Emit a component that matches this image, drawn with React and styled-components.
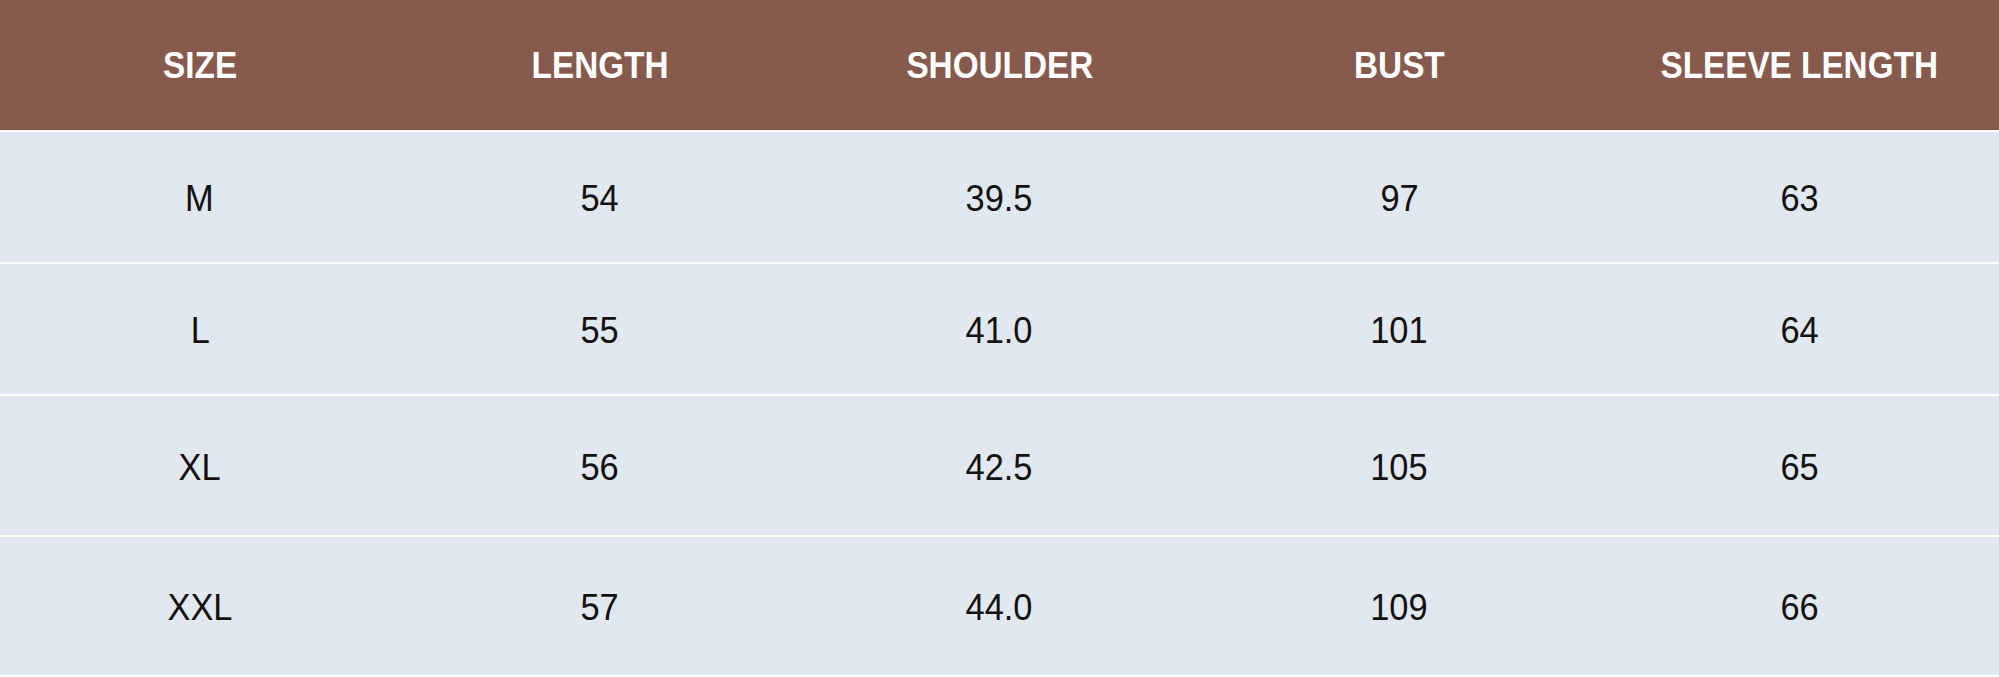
import React from 'react'
import styled, { createGlobalStyle } from 'styled-components'

const GlobalStyle = createGlobalStyle`
*{
  margin:0;
  padding:0;
  box-sizing:border-box;
}
body{
  background:#ffffff;
  font-family:'Liberation Sans', Arial, sans-serif;
}
`

const Table = styled.div`
width:1999px;
display:flex;
flex-direction:column;
gap:2px;
padding-bottom:2px;
background:#ffffff;
`

const Row = styled.div`
display:grid;
grid-template-columns:repeat(5, 1fr);
height:${p => p.h}px;
background:${p => (p.head ? '#875a4e' : '#e1e8f0')};
`

const Cell = styled.div`
display:flex;
align-items:center;
justify-content:center;
padding-top:${p => (p.head ? '2px' : '4px')};
font-size:37px;
color:${p => (p.head ? '#ffffff' : '#111111')};
font-weight:${p => (p.head ? 700 : 400)};
white-space:nowrap;
`

const Text = styled.span`
display:inline-block;
transform:scaleX(${p => (p.head ? 0.9 : 0.93)});
`

const heads = ['SIZE', 'LENGTH', 'SHOULDER', 'BUST', 'SLEEVE LENGTH']

const rows = [
  { h: 130, v: ['M', '54', '39.5', '97', '63'] },
  { h: 130, v: ['L', '55', '41.0', '101', '64'] },
  { h: 139, v: ['XL', '56', '42.5', '105', '65'] },
  { h: 138, v: ['XXL', '57', '44.0', '109', '66'] },
]

export default function App() {
  return (
    <>
      <GlobalStyle />
      <Table>
        <Row head h={130}>
          {heads.map(t => (
            <Cell head key={t}>
              <Text head>{t}</Text>
            </Cell>
          ))}
        </Row>
        {rows.map(r => (
          <Row key={r.v[0]} h={r.h}>
            {r.v.map((t, i) => (
              <Cell key={i}>
                <Text>{t}</Text>
              </Cell>
            ))}
          </Row>
        ))}
      </Table>
    </>
  )
}
